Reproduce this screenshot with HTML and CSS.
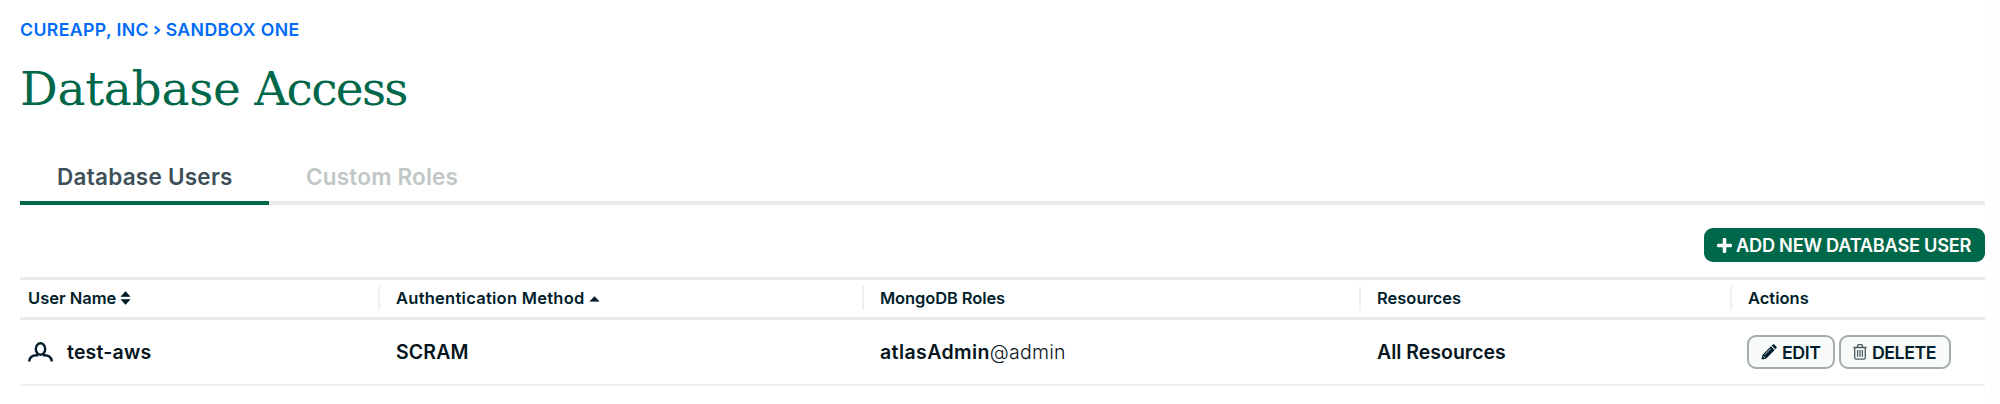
FILE: index.html
```html
<!DOCTYPE html>
<html lang="en">
<head>
<meta charset="utf-8">
<title>Database Access</title>
<link rel="stylesheet" href="styles.css">
</head>
<body>
<main class="page">
  <nav class="crumbs"><a>CUREAPP, INC</a> <svg class="crumb-arrow" width="9" height="12" viewBox="0 0 9 12"><path d="M1.8 2.6 6.2 6.3 1.8 10" fill="none" stroke="currentColor" stroke-width="2"/></svg> <a>SANDBOX ONE</a></nav>
  <h1 class="title">Database <span class="title-end">Access</span></h1>
  <div class="tabs">
    <a class="tab tab-active">Database Users</a>
    <a class="tab tab-custom">Custom Roles</a>
  </div>
  <div class="toolbar">
    <button class="btn btn-primary">
      <svg width="15" height="15" viewBox="0 0 15 15"><path d="M7.5 1.6v11.8M1.6 7.5h11.8" stroke="currentColor" stroke-width="3.6" stroke-linecap="round"/></svg>
      <span class="label-add">ADD NEW DATABASE USER</span>
    </button>
  </div>
  <section class="table">
    <div class="row head">
      <div class="cell c-name"><span class="h-name">User Name</span><svg class="sort" width="11" height="14" viewBox="0 0 11 14"><path d="M5.5 .5 10 5.5H1zM5.5 13.5 10 8.5H1z" fill="currentColor" stroke="currentColor" stroke-width=".6" stroke-linejoin="round"/></svg></div>
      <div class="cell"><span class="h-auth">Authentication Method</span><svg class="sort" width="11" height="14" viewBox="0 0 11 14"><path d="M5.5 5.6 10 10.3H1z" fill="currentColor" stroke="currentColor" stroke-width=".6" stroke-linejoin="round"/></svg></div>
      <div class="cell"><span class="h-mongo">MongoDB Roles</span></div>
      <div class="cell"><span>Resources</span></div>
      <div class="cell"><span>Actions</span></div>
    </div>
    <div class="row body">
      <div class="cell c-name">
        <svg class="user" width="25" height="20" viewBox="0 0 25 20"><ellipse cx="12.5" cy="7" rx="4.7" ry="5.7" fill="none" stroke="currentColor" stroke-width="2.4"/><path d="M1.3 19.6V18.8C1.8 15.5 4.5 13.3 8.5 13.3H10.3M23.7 19.6V18.8C23.2 15.5 20.5 13.3 16.5 13.3H14.7" fill="none" stroke="currentColor" stroke-width="2.4"/></svg>
        <span class="b-name">test-aws</span>
      </div>
      <div class="cell"><span class="b-scram">SCRAM</span></div>
      <div class="cell"><span class="b-role">atlasAdmin</span><span class="b-db">@admin</span></div>
      <div class="cell"><span>All Resources</span></div>
      <div class="cell actions">
        <button class="btn btn-edit">
          <svg width="16" height="16" viewBox="0 0 16 16"><path d="M10 2.3 13.7 6 5 14.7.6 15.4 1.3 11z" fill="currentColor"/><path d="M10.7 1.6 11.8.6q.8-.6 1.5 0l2.1 2.1q.7.8 0 1.5l-1.1 1.1z" fill="currentColor"/><path d="M3.6 10.8 9.6 4.8M2.1 11.9l2.1 2.1" stroke="#f9fbfa" stroke-width=".8" fill="none"/></svg>
          <span class="label-edit">EDIT</span>
        </button>
        <button class="btn btn-delete">
          <svg width="14" height="16" viewBox="0 0 14 16"><path d="M.3 3.5h13.4M4.2 3.3l.7-2.2q.2-.5.7-.5h2.8q.5 0 .7.5l.7 2.2M1.7 3.7v9.8q0 1.7 1.5 1.7h7.6q1.5 0 1.5-1.7V3.7M4.6 6v6.8M7 6v6.8M9.4 6v6.8" fill="none" stroke="currentColor" stroke-width="1.3"/></svg>
          <span class="label-delete">DELETE</span>
        </button>
      </div>
    </div>
  </section>
</main>
</body>
</html>
```
FILE: styles.css
```css
* { box-sizing: border-box; }
body { margin: 0; background: #fff; color: #001e2b; font-family: Inter, "Liberation Sans", sans-serif; font-weight: 600; white-space: nowrap; }
.page { height: 404px; padding: 19px 6px 0 20px; border-right: 9px solid #fdfdfd; overflow: hidden; }
.crumbs { height: 21px; line-height: 21px; font-size: 17.7px; letter-spacing: .38px; color: #016bf8; }
.crumb-arrow { margin: 0 -1px; }
.title { margin: 18px 0 0 0; height: 60px; line-height: 62px; font-family: "DejaVu Serif", serif; font-size: 47px; font-weight: 400; letter-spacing: -.25px; word-spacing: -1px; color: #00684a; }
.title-end { letter-spacing: -1.7px; }
.tabs { display: flex; height: 48px; margin-top: 39px; box-shadow: inset 0 -4px #e8edeb; }
.tab { height: 48px; line-height: 39px; font-size: 22.5px; }
.tab-active { width: 249px; padding-left: 37px; letter-spacing: .25px; color: #3d4f58; border-bottom: 4px solid #00684a; }
.tab-custom { padding-left: 37px; letter-spacing: .2px; color: #c1c7c6; }
.toolbar { display: flex; justify-content: flex-end; margin-top: 23px; }
.btn { display: flex; align-items: center; height: 34px; padding: 0; border-radius: 9px; font: 600 18.2px Inter, "Liberation Sans", sans-serif; color: #001e2b; }
svg { flex: none; }
.btn-primary { width: 281px; padding-left: 13px; gap: 4px; border: 0; background: #00684a; color: #fff; }
.label-add { letter-spacing: -.24px; }
.table { margin-top: 15px; border-top: 3px solid #e8edeb; }
.row { display: grid; grid-template-columns: 358px 484px 497px 371px 1fr; align-items: center; }
.head { height: 40px; padding-bottom: 1px; font-size: 16.5px; border-bottom: 3px solid #e8edeb; }
.head .cell { height: 24px; padding-left: 16px; border-left: 2px solid #eef1f0; }
.head .c-name { padding-left: 8px; border-left: 0; }
.cell { display: flex; align-items: center; padding-left: 18px; }
.h-auth { letter-spacing: .26px; }
.h-mongo { letter-spacing: -.11px; }
.sort { margin-left: 4px; }
.body { height: 66px; font-size: 19.5px; color: #06151d; border-bottom: 2px solid #eef1f0; }
.body .c-name { padding-left: 8px; }
.user { margin-right: 14px; color: #001e2b; }
.b-name { letter-spacing: .2px; }
.b-scram { letter-spacing: .14px; }
.b-role { letter-spacing: .4px; }
.b-db { font-weight: 300; letter-spacing: .25px; }
.body .actions { gap: 4px; padding-left: 17px; }
.actions .btn { border: 2px solid #a3adaf; background: #f9fbfa; }
.btn-edit { width: 88px; padding-left: 12px; gap: 5px; }
.btn-delete { width: 112px; padding-left: 12px; gap: 5px; }
.btn-delete svg { color: #4b5b63; }
.label-edit { font-size: 17.8px; letter-spacing: -.4px; }
.label-delete { font-size: 17.8px; letter-spacing: -.5px; }
```
